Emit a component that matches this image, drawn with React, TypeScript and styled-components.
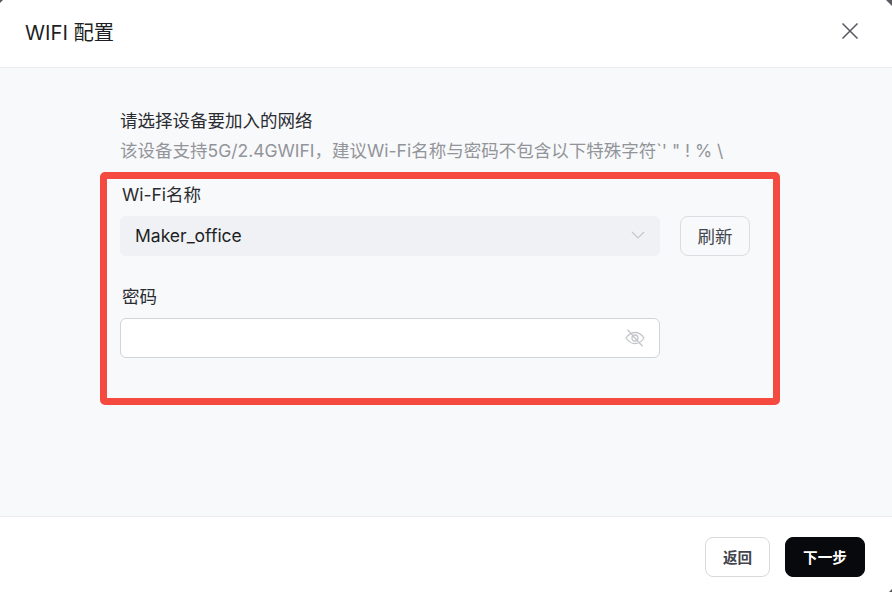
import React from "react";
import styled, { createGlobalStyle } from "styled-components";

const Global = createGlobalStyle`
  html, body { margin: 0; padding: 0; background: #fff; }
  body { font-family: Inter, "Noto Sans CJK SC", sans-serif; }
  * { box-sizing: border-box; }
`;

const Dialog = styled.div`
  position: relative;
  width: 892px;
  height: 592px;
  overflow: hidden;
  display: flex;
  flex-direction: column;
  background: #fff;
`;

const Header = styled.header`
  height: 68px;
  flex: none;
  display: flex;
  align-items: center;
  justify-content: space-between;
  padding: 0 33px 5px 25px;
  border-bottom: 1px solid #ebebf2;
`;

const Title = styled.h1`
  margin: 0;
  font-size: 20.3px;
  font-weight: 400;
  color: #1d1f24;
`;

const CloseIcon = styled.svg`
  width: 18px;
  height: 18px;
  display: block;
  color: #55585e;
`;

const Body = styled.main`
  flex: 1;
  background: #f8f9fb;
  padding: 38px 112px 0 100px;
`;

const Intro = styled.div`
  padding-left: 20px;
  height: 66px;
`;

const Heading = styled.div`
  font-size: 17.5px;
  line-height: 30px;
  color: #2a2c31;
`;

const Hint = styled.div`
  font-size: 17.5px;
  line-height: 30px;
  color: #929499;
  white-space: nowrap;
`;

const Highlight = styled.section`
  width: 680px;
  height: 233px;
  border: 7px solid #f44a3f;
  border-radius: 5px;
  padding: 3px 23px 0 13px;
`;

const Label = styled.div`
  font-size: 17.5px;
  line-height: 26px;
  color: #2a2c31;
  padding-left: 2px;
`;

const Row = styled.div`
  display: flex;
  gap: 20px;
  margin-top: 8px;
`;

const SelectBox = styled.div`
  width: 540px;
  height: 40px;
  border-radius: 6px;
  background: #f0f1f4;
  display: flex;
  align-items: center;
  justify-content: space-between;
  padding: 0 15px 2px;
  font-size: 17.5px;
  color: #1d1f24;
`;

const RefreshButton = styled.button`
  width: 70px;
  height: 40px;
  padding: 0 0 2px;
  border: 1px solid #dcdde0;
  border-radius: 8px;
  background: transparent;
  font: inherit;
  font-size: 17.5px;
  color: #43464d;
`;

const PasswordLabel = styled(Label)`
  margin-top: 28px;
`;

const PasswordBox = styled.div`
  width: 540px;
  height: 40px;
  margin-top: 8px;
  border: 1px solid #d3d4d8;
  border-radius: 6px;
  background: #fff;
  display: flex;
  align-items: center;
  justify-content: flex-end;
  padding: 0 14px;
`;

const Footer = styled.footer`
  height: 76px;
  flex: none;
  display: flex;
  justify-content: flex-end;
  align-items: flex-start;
  gap: 15px;
  padding: 20px 27px 0 0;
  border-top: 1px solid #ebebf2;
`;

const FooterButton = styled.button<{ $primary?: boolean }>`
  width: ${(p) => (p.$primary ? "80px" : "65px")};
  height: 40px;
  padding: 0 0 2px;
  border-radius: 8px;
  border: 1px solid ${(p) => (p.$primary ? "#07090d" : "#d8d9dc")};
  background: ${(p) => (p.$primary ? "#07090d" : "#fff")};
  color: ${(p) => (p.$primary ? "#fff" : "#43464d")};
  font: inherit;
  font-size: 14.6px;
  font-weight: 700;
`;

const Corner = styled.span<{ $x: "left" | "right"; $y: "top" | "bottom"; $size: number }>`
  position: absolute;
  ${(p) => p.$x}: 0;
  ${(p) => p.$y}: 0;
  width: ${(p) => p.$size}px;
  height: ${(p) => p.$size}px;
  background: #5a5a5e;
  clip-path: ${(p) =>
    p.$x === "left"
      ? "polygon(0 0, 100% 0, 0 100%)"
      : p.$y === "top"
        ? "polygon(0 0, 100% 0, 100% 100%)"
        : "polygon(100% 0, 100% 100%, 0 100%)"};
`;

const Watermark = styled.span<{ $left: number; $top: number }>`
  position: absolute;
  left: ${(p) => p.$left}px;
  top: ${(p) => p.$top}px;
  font-size: 26px;
  line-height: 1;
  color: rgba(70, 80, 110, 0.022);
  white-space: nowrap;
  transform: rotate(-35deg);
  transform-origin: left bottom;
  pointer-events: none;
`;

export default function App() {
  return (
    <Dialog>
      <Global />
      <Header>
        <Title>WIFI 配置</Title>
        <CloseIcon viewBox="0 0 18 18" fill="none" stroke="currentColor" strokeWidth="1.5">
          <path d="M1.5 1.5 16.5 16.5M16.5 1.5 1.5 16.5" />
        </CloseIcon>
      </Header>
      <Body>
        <Intro>
          <Heading>请选择设备要加入的网络</Heading>
          <Hint>该设备支持5G/2.4GWIFI，建议Wi-Fi名称与密码不包含以下特殊字符`' " ! % \</Hint>
        </Intro>
        <Highlight>
          <Label>Wi-Fi名称</Label>
          <Row>
            <SelectBox>
              Maker_office
              <svg width="14" height="8" viewBox="0 0 14 8" fill="none" stroke="#c6c7cb" strokeWidth="1.2">
                <path d="M1 1 7 7 13 1" />
              </svg>
            </SelectBox>
            <RefreshButton>刷新</RefreshButton>
          </Row>
          <PasswordLabel>密码</PasswordLabel>
          <PasswordBox>
            <svg width="20" height="18" viewBox="0 0 20 18" fill="none" stroke="#c6c7cb" strokeWidth="1.3">
              <path d="M1 9C3.5 5.3 6.5 3.5 10 3.5S16.5 5.3 19 9C16.5 12.7 13.5 14.5 10 14.5S3.5 12.7 1 9Z" />
              <circle cx="10" cy="9" r="3" />
              <path d="M2.5 .8 17.5 17.2" />
            </svg>
          </PasswordBox>
        </Highlight>
      </Body>
      <Footer>
        <FooterButton>返回</FooterButton>
        <FooterButton $primary>下一步</FooterButton>
      </Footer>
      <Watermark $left={40} $top={450}>.com</Watermark>
      <Watermark $left={565} $top={355}>tool.com</Watermark>
      <Watermark $left={735} $top={85}>2024</Watermark>
      <Corner $x="left" $y="top" $size={3} />
      <Corner $x="right" $y="top" $size={6} />
      <Corner $x="right" $y="bottom" $size={3} />
    </Dialog>
  );
}
